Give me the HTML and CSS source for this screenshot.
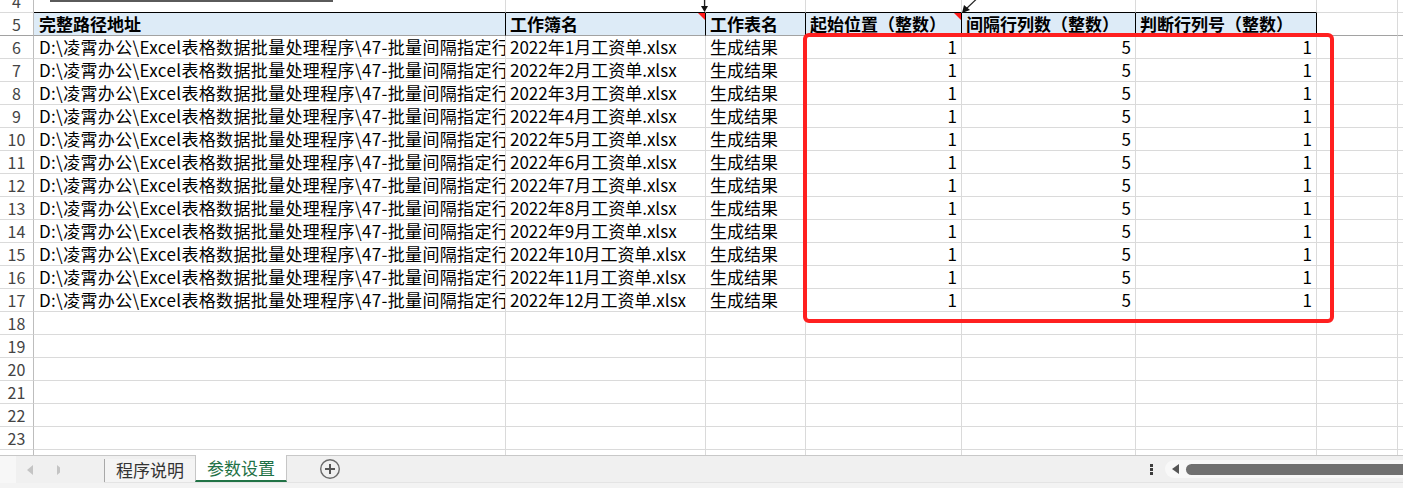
FILE: index.html
```html
<!DOCTYPE html>
<html lang="zh-CN">
<head>
    <meta charset="UTF-8">
    <title>参数设置</title>
    <link rel="stylesheet" href="styles.css">
</head>
<body>

    <div class="sheet">
        <div class="grid" id="grid"></div>

        <!-- leftover line from row 3 -->
        <div class="top-line"></div>

        <!-- comment arrows -->
        <svg class="arrows" width="1403" height="40" viewBox="0 0 1403 40">
            <line x1="704.5" y1="-4" x2="704.5" y2="8" stroke="#222" stroke-width="1.2"/>
            <polygon points="701,6 708,6 704.5,12" fill="#111"/>
            <line x1="986" y1="-10" x2="966" y2="9" stroke="#222" stroke-width="1.2"/>
            <polygon points="962,13 964,5 970,10" fill="#111"/>
        </svg>

        <div class="mark-box"></div>
    </div>

    <div class="tabbar">
        <div class="nav">
            <svg width="60" height="14" viewBox="0 0 60 14">
                <polygon points="33,2 33,12 27,7" fill="#c4c4c4"/>
                <polygon points="57,2 57,12 63,7" fill="#c4c4c4"/>
            </svg>
        </div>
        <div class="tab">程序说明</div>
        <div class="tab active">参数设置</div>
        <div class="add-sheet">
            <svg width="22" height="22" viewBox="0 0 22 22">
                <circle cx="11" cy="11" r="9.3" fill="none" stroke="#6a6a6a" stroke-width="1.4"/>
                <line x1="6" y1="11" x2="16" y2="11" stroke="#555" stroke-width="2"/>
                <line x1="11" y1="6" x2="11" y2="16" stroke="#555" stroke-width="2"/>
            </svg>
        </div>
        <div class="hscroll">
            <div class="dots"><span></span><span></span><span></span></div>
            <div class="track">
                <span class="arrow-left"></span>
                <span class="thumb"></span>
            </div>
        </div>
    </div>
    <div class="status-strip"></div>

    <script>
        // only the part that shows inside column A
        const basePath = "D:\\凌霄办公\\Excel表格数据批量处理程序\\47-批量间隔指定行";
        const headers = ["完整路径地址", "工作簿名", "工作表名", "起始位置（整数）", "间隔行列数（整数）", "判断行列号（整数）"];

        function cell(text, cls) {
            return `<div class="cell ${cls || ''}">${text}</div>`;
        }

        let html = '';

        // row 4 (cut off at the top)
        html += `<div class="row r4">${cell('4', 'rn')}${headers.map(() => cell('', 'top-edge')).join('')}${cell('')}${cell('')}</div>`;

        // row 5 header
        html += `<div class="row head">${cell('5', 'rn')}${headers.map((h, i) => cell(h, 'th' + (i === 1 || i === 3 ? ' note' : ''))).join('')}${cell('')}${cell('')}</div>`;

        // rows 6-17
        for (let m = 1; m <= 12; m++) {
            html += `<div class="row">${cell(m + 5, 'rn')}${cell(basePath, 'path')}${cell("2022年" + m + "月工资单.xlsx")}${cell("生成结果")}${cell(1, 'n')}${cell(5, 'n')}${cell(1, 'n')}${cell('')}${cell('')}</div>`;
        }

        // empty rows 18-24
        for (let r = 18; r <= 24; r++) {
            html += `<div class="row">${cell(r, 'rn')}${cell('')}${cell('')}${cell('')}${cell('')}${cell('')}${cell('')}${cell('')}${cell('')}</div>`;
        }

        document.getElementById('grid').innerHTML = html;
    </script>

</body>
</html>
```

FILE: styles.css
```css
/* General */
body {
    margin: 0;
    padding: 0;
    width: 1403px;
    height: 488px;
    overflow: hidden;
    background: #fff;
    font-family: "Noto Sans CJK SC", "Noto Sans", sans-serif;
    color: #000;
}

/* Sheet area */
.sheet {
    position: relative;
    height: 455px;
    overflow: hidden;
}

.grid {
    margin-top: -10px;
}

.row {
    display: grid;
    grid-template-columns: 34px 472px 200px 100px 156px 174px 181px 81px 1fr;
    height: 23px;
}

.cell {
    position: relative;
    box-sizing: border-box;
    border-right: 1px solid #dadada;
    border-bottom: 1px solid #dadada;
    padding: 0 4px;
    font-size: 17px;
    line-height: 22px;
    white-space: nowrap;
    overflow: hidden;
}

.cell:first-child + .cell {
    padding-left: 5px;
}

.cell.path {
    letter-spacing: 0.35px;
}

/* Row numbers */
.cell.rn {
    padding: 0;
    text-align: center;
    font-size: 16px;
    color: #444;
    border-right-color: #bdbdbd;
}

.cell.n {
    text-align: right;
}

/* Header row */
.r4 .top-edge {
    border-bottom-color: #000;
}

.head .cell {
    border-bottom-color: #a2a2a2;
}

.head .th {
    background: #ddebf7;
    font-weight: bold;
    border-right-color: #000;
}

.cell.note {
    overflow: visible;
}

.cell.note::after {
    content: "";
    position: absolute;
    top: 0;
    right: 0;
    border-top: 7px solid #ff1a1a;
    border-left: 7px solid transparent;
}

/* Overlays */
.top-line {
    position: absolute;
    left: 50px;
    top: 0;
    width: 283px;
    height: 2px;
    background: #5a5a5a;
}

.arrows {
    position: absolute;
    left: 0;
    top: 0;
}

.mark-box {
    position: absolute;
    left: 803px;
    top: 33px;
    width: 531px;
    height: 290px;
    box-sizing: border-box;
    border: 4px solid #ff2020;
    border-radius: 6px;
}

/* Sheet tabs */
.tabbar {
    display: flex;
    align-items: flex-start;
    height: 28px;
    box-sizing: border-box;
    background: #f0f0f0;
    border-top: 1px solid #c8c8c8;
    border-bottom: 1px solid #e4e4e4;
}

.nav {
    width: 104px;
    height: 27px;
    display: flex;
    align-items: center;
    background: linear-gradient(90deg, #f7f7f7 16px, #f0f0f0 16px);
}

.tab {
    box-sizing: border-box;
    width: 91px;
    height: 23px;
    margin-top: 3px;
    border-left: 1px solid #a8a8a8;
    background: #f4f4f4;
    font-size: 17px;
    line-height: 22px;
    text-align: center;
    color: #333;
}

.tab.active {
    width: 92px;
    height: 27px;
    margin-top: -1px;
    border-left: 1px solid #c6c6c6;
    border-right: 1px solid #c6c6c6;
    border-bottom: 2px solid #217346;
    background: #fff;
    line-height: 26px;
    color: #1e7145;
}

.add-sheet {
    margin-left: 32px;
    margin-top: 2px;
    height: 22px;
}

/* Horizontal scroll */
.hscroll {
    margin-left: auto;
    display: flex;
    align-items: center;
    height: 26px;
}

.dots {
    display: flex;
    flex-direction: column;
    gap: 1px;
    width: 16px;
}

.dots span {
    width: 3px;
    height: 3px;
    background: #3c3c3c;
    margin-left: 1px;
}

.track {
    width: 238px;
    height: 18px;
    display: flex;
    align-items: center;
    background: #f8f8f8;
    border-radius: 9px 0 0 9px;
}

.arrow-left {
    margin-left: 7px;
    border-right: 7px solid #555;
    border-top: 5px solid transparent;
    border-bottom: 5px solid transparent;
}

.thumb {
    flex: 1;
    height: 11px;
    margin-left: 7px;
    background: #707070;
    border-radius: 6px 0 0 6px;
}

.status-strip {
    height: 5px;
    background: #f3f3f3;
}
```
